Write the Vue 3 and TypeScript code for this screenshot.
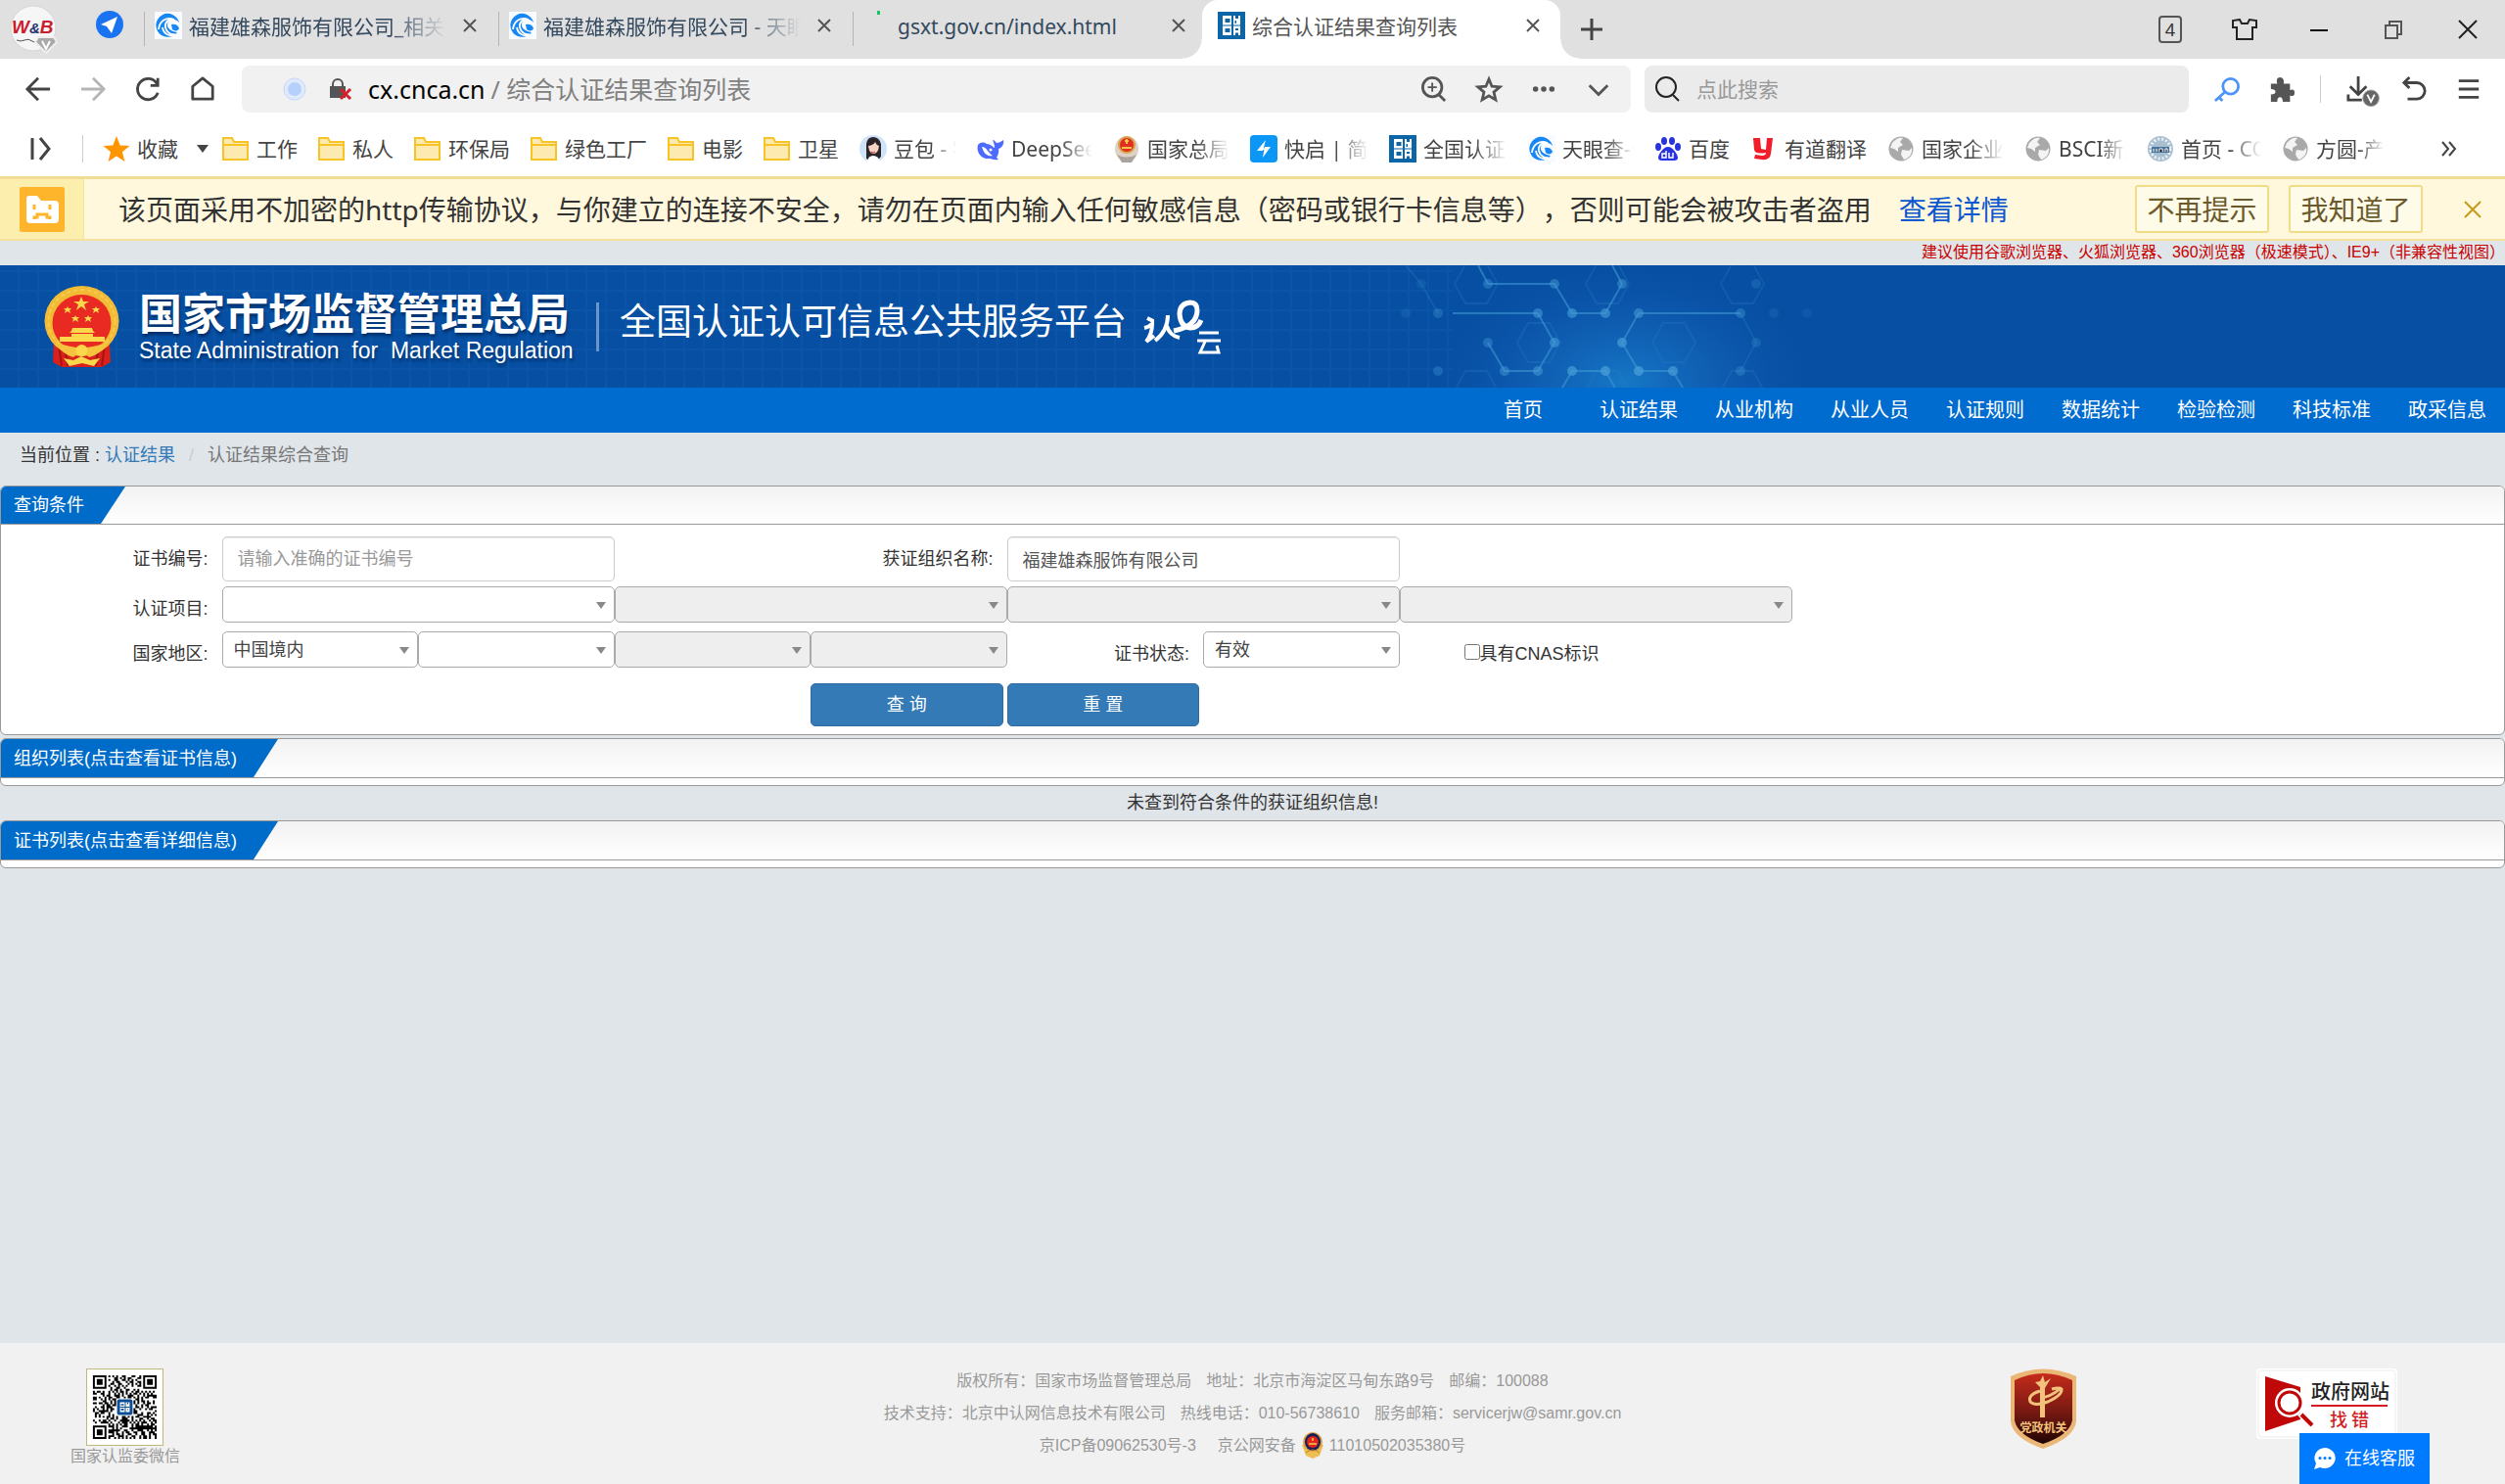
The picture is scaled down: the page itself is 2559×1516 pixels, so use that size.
<script setup lang="ts">
import { ref } from 'vue'

interface Tab { title: string; icon: string; active?: boolean; clipped?: boolean }
interface Bookmark { title: string; icon: string; width: number; fade?: boolean }

const cnca = '<rect width="28" height="28" fill="#0b65a6"/><path d="M5 4h9v20H5zM16 4h7v20h-7z" fill="#fff"/><path d="M7.500 7h5v4h-5zM7.500 17h5v4h-5zM5 13.500h9v1H5zM18 4h3v3h-3zM17.500 9h1.500v3h-1.500zM16 13.500h7v1h-7zM18 17h3v2h-3zM18 21.500h3V24h-3z" fill="#0b65a6"/>'
const tianyan = '<rect width="28" height="28" fill="#f8fbff"/><path d="M23 21A12 12 0 1 1 25 11c-4-5-11-4-12 1-1 4 3 8 10 9z" fill="#1687f5"/><path d="M4 18C5 9 12 5 20 8c-6-1-10 3-9 8s6 8 10 7c-5 3-12 0-13-7" fill="none" stroke="#fff" stroke-width="1.800"/><path d="M17 13c3-1 7 0 8 4-1 3-5 3-7 1" fill="#1687f5"/>'
const folder = '<path d="M1 3h9l2 4h14v18H1z" fill="#fdeab0" stroke="#f7c325" stroke-width="2"/><path d="M2 10h23" stroke="#f7c325" stroke-width="2"/>'
const globe = '<circle cx="14" cy="14" r="12.500" fill="#a9a9a9"/><path d="M5 8c4-5 8-6 11-5l-3 4 3 3-5 3v4l-4-3-4-1zM15 15l7 1 3-3c1 6-3 11-8 12l-3-5z" fill="#f4f4f4"/>'

const tabs: Tab[] = [
  { title: '福建雄森服饰有限公司_相关搜', icon: tianyan, clipped: true },
  { title: '福建雄森服饰有限公司 - 天眼查', icon: tianyan, clipped: true },
  { title: 'gsxt.gov.cn/index.html', icon: '<rect x="14" y="-1" width="3" height="4" fill="#14c866"/>' },
  { title: '综合认证结果查询列表', icon: cnca, active: true },
]

const bookmarks: Bookmark[] = [
  { title: '工作', icon: folder, width: 42 },
  { title: '私人', icon: folder, width: 42 },
  { title: '环保局', icon: folder, width: 63 },
  { title: '绿色工厂', icon: folder, width: 84 },
  { title: '电影', icon: folder, width: 42 },
  { title: '卫星', icon: folder, width: 42 },
  { title: '豆包 - 字', icon: '<circle cx="14" cy="14" r="14" fill="#cfe4fb"/><path d="M7 24V9q1-7 7-7t8 7v13l-3 3H9z" fill="#2b2529"/><path d="M9 11q6-1 7-4 1 3 4 4-1 8-5.500 8T9 11z" fill="#f8d5c4"/><path d="M8 27q1-6 6-6t7 6q-7 3-13 0z" fill="#fff"/><path d="M12 17q2 2 4 0" stroke="#c33" fill="none"/>', width: 64, fade: true },
  { title: 'DeepSeek', icon: '<path d="M1 10c3-3 6-3 9-1 4 0 6 3 8 4 0-3-1-6-2-8 2 0 3 2 4 3 3 0 5-2 7-3 1 5-2 8-5 9 1 4-1 7-2 9l2 2c-4 1-7-1-9-1C4 25-1 17 1 10z" fill="#4d6bfe"/><path d="M5 12c5 0 6 6 11 9-4 1-7-1-9-4z" fill="#fff"/><circle cx="14" cy="15" r="1.500" fill="#fff"/>', width: 83, fade: true },
  { title: '国家总局', icon: '<ellipse cx="14" cy="14" rx="12" ry="13" fill="#ddd2c5"/><circle cx="14" cy="10" r="9" fill="#d9a349"/><circle cx="14" cy="10" r="7" fill="#e12d22"/><path d="M9 13h10M14 4v5M12 6h4" stroke="#f8c647" stroke-width="2"/><path d="M4 20q10 5 20 0l-5 8H9z" fill="#aaa39d"/>', width: 84, fade: true },
  { title: '快启 | 简约', icon: '<rect width="28" height="28" rx="4" fill="#0c96f6"/><path d="M16 5l-9 11h6zM13 23l8-11h-6zM12 15h4l-2-2z" fill="#fff"/>', width: 86, fade: true },
  { title: '全国认证', icon: cnca, width: 86, fade: true },
  { title: '天眼查-企', icon: tianyan, width: 73, fade: true },
  { title: '百度', icon: '<ellipse cx="4" cy="12" rx="3" ry="4" fill="#2932e1"/><ellipse cx="10" cy="6" rx="3" ry="4" fill="#2932e1"/><ellipse cx="18" cy="6" rx="3" ry="4" fill="#2932e1"/><ellipse cx="24" cy="12" rx="3" ry="4" fill="#2932e1"/><path d="M14 12c5 0 10 8 10 11 0 4-5 3-10 3s-10 1-10-3c0-3 5-11 10-11z" fill="#2932e1"/><path d="M12 16v7H8v-4h4M15 18v5h4v-5" stroke="#fff" stroke-width="1.500" fill="none"/>', width: 42 },
  { title: '有道翻译', icon: '<path d="M3 3h7l1 11 5 1 1-12h6l-2 16q-1 7-9 6l-8-1 1-4 7 1q4 0 4-3-11 2-12-3z" fill="#f21d2b"/>', width: 84 },
  { title: '国家企业', icon: globe, width: 84, fade: true },
  { title: 'BSCI新版', icon: globe, width: 69, fade: true },
  { title: '首页 - CQC', icon: '<circle cx="14" cy="14" r="13" fill="#a8bfd2"/><circle cx="14" cy="14" r="10" fill="none" stroke="#e9f0f6" stroke-width="3" stroke-dasharray="2 2"/><path d="M5 12h18v6H5z" fill="#4b7399"/><path d="M7 17v-3M10 17v-3M13 17v-3h3v3M19 17v-3h2v3" stroke="#fff"/>', width: 82, fade: true },
  { title: '方圆-产品', icon: globe, width: 70, fade: true },
]

const navItems = ['首页', '认证结果', '从业机构', '从业人员', '认证规则', '数据统计', '检验检测', '科技标准', '政采信息']
const certNo = ref('')
const orgName = ref('福建雄森服饰有限公司')
const cnas = ref(false)

/* Bright nodes and links of the header artwork: x, y, opacity */
const nodes = [
  [100, 19, 0.5], [168, 19, 0.6], [237, 19, 0.6], [151, 49, 0.7], [186, 49, 0.8], [220, 49, 0.8], [254, 49, 0.7],
  [358, 49, 0.5], [49, 49, 0.4], [100, 79, 0.5], [168, 79, 0.8], [237, 79, 0.9], [374, 19, 0.3], [374, 79, 0.3],
  [117, 108, 0.6], [151, 108, 0.7], [186, 108, 0.9], [220, 108, 1], [254, 108, 1], [289, 108, 0.9], [49, 108, 0.4],
  [358, 108, 0.4], [32, 19, 0.2], [16, 49, 0.2], [392, 49, 0.2], [426, 49, 0.15],
]
const hexes = [[222, 19], [152, 79], [290, 79], [88, 19], [360, 19], [222, 128], [360, 128], [88, 128]]

/* Deterministic module grid for the QR picture */
const size = 33
const modules: number[][] = []
let seed = 7919
for (let y = 0; y < size; y++) {
  for (let x = 0; x < size; x++) {
    seed = (seed * 1103515245 + 12345) % 2147483648
    const corner = (x < 8 && y < 8) || (x > 24 && y < 8) || (x < 8 && y > 24)
    const centre = x > 11 && x < 21 && y > 11 && y < 21
    if (!corner && !centre && (seed >> 12) % 2 === 0) modules.push([x, y])
  }
}
const qrPath = modules.map(([x, y]) => `M${x} ${y}h1v1h-1z`).join('')
</script>

<template>
  <div class="page">
    <div class="tabstrip">
      <div class="profile">
        <svg class="avatar" viewBox="0 0 50 50"><circle cx="24" cy="25" r="23" fill="#f6f6f6" stroke="#d5d5d5" /><text x="2" y="30" font-family="Liberation Sans" font-style="italic" font-weight="700" font-size="19" fill="#c8202e">W<tspan font-size="15" fill="#27356f">&amp;</tspan>B</text><path d="M7 37q4 2 8 0t8 1 8-1" fill="none" stroke="#555" /><path d="M29 34h16l3 5-11 11-11-11z" fill="#aaa" stroke="#eee" stroke-width="2" /><path d="M33 38l4 8 4-8" fill="none" stroke="#fff" stroke-width="2" /></svg>
        <svg class="plane" viewBox="0 0 28 28"><circle cx="14" cy="14" r="14" fill="#1a73f0" /><path d="M22 6L5 14l6 2 5 7z" fill="#fff" /></svg>
      </div>
      <div v-for="tab in tabs" :key="tab.title" class="tab" :class="{ active: tab.active }">
        <svg class="site" viewBox="0 0 28 28" v-html="tab.icon"></svg>
        <span class="tab-title" :class="{ fade: tab.clipped }">{{ tab.title }}</span>
        <button class="close" aria-label="关闭标签"><svg width="14" height="14" viewBox="0 0 14 14"><path d="M1 1l12 12M13 1L1 13" stroke="#555" stroke-width="2" /></svg></button>
      </div>
      <button class="newtab" aria-label="新标签"><svg width="22" height="22" viewBox="0 0 22 22"><path d="M11 0v22M0 11h22" stroke="#444" stroke-width="3" /></svg></button>
      <div class="winctl">
        <button aria-label="标签数"><span class="count">4</span></button>
        <button aria-label="皮肤"><svg width="26" height="24" viewBox="0 0 26 24"><path d="M8 2L1 3v7h4v12h16V10h4V3l-7-1-2 4h-6z" fill="none" stroke="#222" stroke-width="2" /></svg></button>
        <button aria-label="最小化"><svg width="20" height="20" viewBox="0 0 20 20"><path d="M1 11h18" stroke="#111" stroke-width="2" /></svg></button>
        <button aria-label="还原"><svg width="20" height="20" viewBox="0 0 20 20"><path d="M2 6h12v13H2zM6 6V2h12v13h-4" fill="none" stroke="#555" stroke-width="2" /></svg></button>
        <button aria-label="关闭"><svg width="20" height="20" viewBox="0 0 20 20"><path d="M1 1l18 18M19 1L1 19" stroke="#222" stroke-width="2" /></svg></button>
      </div>
    </div>

    <div class="toolbar">
      <button class="tool" aria-label="后退"><svg viewBox="0 0 28 28"><path d="M27 14H3M14 2L2 14l12 12" /></svg></button>
      <button class="tool dim" aria-label="前进"><svg viewBox="0 0 28 28"><path d="M1 14h24M14 2l12 12-12 12" /></svg></button>
      <button class="tool" aria-label="刷新"><svg viewBox="0 0 28 28"><path d="M24 8A11.500 11.500 0 1 0 25 18M25 2v8h-8" /></svg></button>
      <button class="tool" aria-label="主页"><svg viewBox="0 0 28 28"><path d="M3 11L14 2l11 9v14H3z" stroke-linejoin="round" /></svg></button>
      <div class="address">
        <svg class="halo" viewBox="0 0 24 24"><circle cx="12" cy="12" r="11" fill="#e1eafb" stroke="#c4d8fa" /><circle cx="12" cy="12" r="7" fill="#b5d0fb" /></svg>
        <svg class="lock" viewBox="0 0 24 24"><path d="M4 10V7a5 5 0 0 1 10 0v3" fill="none" stroke="#555" stroke-width="2" /><path d="M1 9h16v12H1z" fill="#555" /><path d="M12 12l10 10M22 12L12 22" stroke="#d8202a" stroke-width="3" /></svg>
        <span class="host">cx.cnca.cn</span><span class="path">/ 综合认证结果查询列表</span>
        <div class="addr-tools">
          <button class="tool" aria-label="缩放"><svg viewBox="0 0 28 28"><circle cx="12" cy="12" r="10.500" /><path d="M19 20l7 7" /><path d="M12 7v10M7 12h10" stroke-width="2" /></svg></button>
          <button class="tool" aria-label="收藏"><svg viewBox="0 0 28 28"><path d="M14 3l3.300 8 8.700.700-6.600 5.600 2 8.500L14 21.300l-7.400 4.500 2-8.500L2 11.700l8.700-.700z" /></svg></button>
          <button class="tool" aria-label="更多"><svg viewBox="0 0 28 28"><g class="dots"><circle cx="5" cy="14" r="3" /><circle cx="14" cy="14" r="3" /><circle cx="23" cy="14" r="3" /></g></svg></button>
          <button class="tool" aria-label="展开"><svg viewBox="0 0 28 28"><path d="M4 10l10 10 10-10" /></svg></button>
        </div>
      </div>
      <div class="search">
        <svg width="28" height="28" viewBox="0 0 28 28"><circle cx="12" cy="12" r="10" fill="none" stroke="#222" stroke-width="2" /><path d="M19 20l6 6" stroke="#222" stroke-width="2" /></svg>
        <input type="text" placeholder="点此搜索" aria-label="搜索" />
      </div>
      <div class="extras">
        <button class="tool" aria-label="密码"><svg viewBox="0 0 28 28"><g stroke="#4c94f7"><circle cx="18" cy="11" r="8.500" /><path d="M12 17L1 27M5 23l4 4" /></g></svg></button>
        <button class="tool" aria-label="扩展"><svg viewBox="0 0 28 28"><path d="M2 8h7q-2-7 3-7t4 7h7v7q5-2 5 3t-5 3v7h-8q0-5-3-5t-3 5H2v-8q5 0 5-3t-5-3z" fill="#555" stroke="none" /></svg></button>
        <i class="rule"></i>
        <button class="tool" aria-label="下载"><svg viewBox="0 0 28 28"><path d="M13 0v19M4 11l9 9 9-9M2 20v6h15" /><circle cx="27" cy="24" r="9" fill="#666" stroke="#aaa" stroke-width="1" /><path d="M23 20l4 8 4-8" stroke="#fff" stroke-width="2" /></svg></button>
        <button class="tool" aria-label="撤销"><svg viewBox="0 0 28 28"><path d="M9 1L3 7l6 6M3 7h14a9 9 0 0 1 0 18H7" /></svg></button>
        <button class="tool" aria-label="菜单"><svg viewBox="0 0 28 28"><path d="M3 5h22M3 14h22M3 23h22" /></svg></button>
      </div>
    </div>

    <div class="bookmarks">
      <svg class="expand" viewBox="0 0 24 24"><path d="M3 1v22M11 1l9 11-9 11" fill="none" stroke="#444" stroke-width="3" /></svg>
      <i class="rule"></i>
      <div class="fav">
        <svg width="28" height="28" viewBox="0 0 28 28"><path d="M14 1l3.700 9.500 9.800.500-7.600 6.300 2.600 9.700L14 21.500 5.500 27l2.600-9.700L.500 11l9.800-.500z" fill="#ff9500" /></svg>
        <span>收藏</span>
        <svg width="12" height="8" viewBox="0 0 12 8"><path d="M0 0h12L6 8z" fill="#444" /></svg>
      </div>
      <a v-for="(b, i) in bookmarks" :key="i" href="#" class="bm">
        <svg class="site" viewBox="0 0 28 28" v-html="b.icon"></svg>
        <span :class="{ fade: b.fade }" :style="{ width: b.width + 'px' }">{{ b.title }}</span>
      </a>
      <svg class="more" width="16" height="16" viewBox="0 0 16 16"><path d="M1 1l6 7-6 7M8 1l6 7-6 7" fill="none" stroke="#444" stroke-width="2" /></svg>
    </div>

    <div class="notice">
      <div class="notice-icon">
        <svg width="46" height="46" viewBox="0 0 46 46"><rect width="46" height="46" rx="2" fill="#ffb52b" /><path d="M7 12q0-3 3-3h8l4 5h14q4 0 4 4v15q0 4-4 4H11q-4 0-4-4z" fill="#fff" /><path d="M15 18v5M31 18v5M15 33v-2h3v-3h10v3h3v2" fill="none" stroke="#ffb52b" stroke-width="3" /></svg>
      </div>
      <p>该页面采用不加密的http传输协议，与你建立的连接不安全，请勿在页面内输入任何敏感信息（密码或银行卡信息等），否则可能会被攻击者盗用</p>
      <a href="#">查看详情</a>
      <div class="notice-actions">
        <button>不再提示</button>
        <button>我知道了</button>
        <button class="dismiss" aria-label="关闭提示"><svg width="18" height="18" viewBox="0 0 18 18"><path d="M1 1l16 16M17 1L1 17" stroke="#c49a18" stroke-width="2" /></svg></button>
      </div>
    </div>

    <p class="advice">建议使用谷歌浏览器、火狐浏览器、360浏览器（极速模式）、IE9+（非兼容性视图）</p>

    <header class="banner">
      <svg class="art" width="500" height="125" viewBox="0 0 500 125">
        <defs><radialGradient id="glow"><stop offset="0" stop-color="#1a83cf" stop-opacity=".8" /><stop offset="1" stop-color="#1a5fbf" stop-opacity="0" /></radialGradient></defs>
        <ellipse cx="240" cy="120" rx="190" ry="120" fill="url(#glow)" />
        <g fill="none" stroke="#2f80c8" stroke-opacity=".25" stroke-width="2"><path v-for="([x, y], i) in hexes" :key="i" :d="`M${x - 22} ${y}l11-20h22l11 20-11 20h-22z`" /></g>
        <g fill="none" stroke="#3e97d2" stroke-opacity=".6" stroke-width="2"><path d="M90 0l10 19h68l18 30h34l17-30L227 0M64 49h87M254 49h104M254 49l-17 30 17 29h35l10 17M151 49l17 30-17 29h-34l-17-29M176 125l10-17h34l10 17" /><path d="M16 0l16 19 17 30M358 49l16 30-16 29" stroke-opacity=".2" /></g>
        <circle v-for="([x, y, o], i) in nodes" :key="'n' + i" :cx="x" :cy="y" r="5" fill="#459bd6" :fill-opacity="o * 0.8" />
      </svg>
      <svg class="emblem" viewBox="0 0 77 83">
        <path d="M10 58l57 0 1 20-9 5H18l-9-5z" fill="#d8201c" /><path d="M15 60l3 22M22 66l2 16M62 60l-3 22M55 66l-2 16" stroke="#a8120f" stroke-width="2" />
        <ellipse cx="38.500" cy="36" rx="38" ry="36" fill="#f2bb35" /><ellipse cx="38.500" cy="36" rx="34" ry="32" fill="none" stroke="#f7cb50" stroke-width="2" stroke-dasharray="4 3" />
        <ellipse cx="38.500" cy="38" rx="30" ry="29" fill="#e92a22" />
        <path d="M38 11l2 5h6l-5 3 2 6-5-4-5 4 2-6-5-3h6z" fill="#fbd84b" />
        <g fill="#fbd84b"><path d="M24 21l1 2h3l-2 2 1 3-3-2-3 2 1-3-2-2h3zM53 21l1 2h3l-2 2 1 3-3-2-3 2 1-3-2-2h3zM32 30l1 2h3l-2 2 1 3-3-2-3 2 1-3-2-2h3zM45 30l1 2h3l-2 2 1 3-3-2-3 2 1-3-2-2h3zM29 43h20l1 3 2 2H26l2-2zM28 49h22v3h12v5H16v-5h12z" /></g>
        <path d="M12 57q26 12 54 0-8 13-20 16l-8-8-8 8Q18 70 12 57z" fill="#f5c33e" /><circle cx="38.500" cy="66" r="6" fill="#fbd84b" /><path d="M20 74l10 2 8-4 9 4 10-2-6 8-12-3-13 3z" fill="#fbd84b" />
      </svg>
      <div class="agency">
        <strong>国家市场监督管理总局</strong>
        <span>State Administration &nbsp;for&nbsp; Market Regulation</span>
      </div>
      <i class="bar"></i>
      <h1>全国认证认可信息公共服务平台</h1>
      <svg class="cloud" viewBox="0 0 80 56">
        <g fill="none" stroke="#fff"><path d="M4 19l6 3M1 29q5-1 8-4 0 10-6 18l8-6M25 16q0 16-13 26M24 27q3 10 13 12" stroke-width="4" /><path d="M31 32q24-5 24-21 0-8-7-8-11 1-11 12 1 13 11 14 8 0 11-8" stroke-width="5" /></g>
        <path d="M57 34h20M55 42h24M63 43l-5 11h19l-2-7" fill="none" stroke="#fff" stroke-width="3" />
      </svg>
    </header>
    <nav class="nav"><a v-for="n in navItems" :key="n" href="#">{{ n }}</a></nav>

    <main>
      <div class="crumbs">当前位置 : <a href="#">认证结果</a><i>/</i><span>认证结果综合查询</span></div>

      <section class="panel">
        <div class="head"><h2>查询条件</h2></div>
        <form class="form" @submit.prevent>
          <label class="lbl" for="certNo">证书编号:</label>
          <input id="certNo" v-model="certNo" class="span2" type="text" placeholder="请输入准确的证书编号" />
          <label class="lbl org" for="orgName">获证组织名称:</label>
          <input id="orgName" v-model="orgName" class="span2" type="text" />

          <label class="lbl first" for="project">认证项目:</label>
          <div class="pick span2"><select id="project"><option></option></select></div>
          <div v-for="n in 3" :key="n" class="pick span2"><select disabled :aria-label="'认证项目' + n"></select></div>

          <label class="lbl first" for="country">国家地区:</label>
          <div class="pick"><select id="country"><option>中国境内</option></select></div>
          <div class="pick"><select aria-label="省份"><option></option></select></div>
          <div class="pick"><select disabled aria-label="城市"></select></div>
          <div class="pick"><select disabled aria-label="区县"></select></div>
          <label class="lbl" for="status">证书状态:</label>
          <div class="pick"><select id="status"><option>有效</option></select></div>
          <label class="check"><input v-model="cnas" type="checkbox" />具有CNAS标识</label>

          <div class="actions">
            <button type="submit">查 询</button>
            <button type="reset">重 置</button>
          </div>
        </form>
      </section>

      <section class="panel list">
        <div class="head"><h2>组织列表(点击查看证书信息)</h2></div>
      </section>
      <p class="empty">未查到符合条件的获证组织信息!</p>
      <section class="panel list">
        <div class="head"><h2>证书列表(点击查看详细信息)</h2></div>
      </section>
    </main>

    <footer class="foot">
      <div class="wechat">
        <svg class="qr" viewBox="-3 -3 39 39"><rect x="-3" y="-3" width="39" height="39" fill="#fff" /><path :d="qrPath" /><g fill="none" stroke="#000"><path d="M.500.500h6v6h-6zM26.500.500h6v6h-6zM.500 26.500h6v6h-6z" /></g><path d="M2 2h3v3H2zM28 2h3v3h-3zM2 28h3v3H2z" /><rect x="12.500" y="12.500" width="8" height="8" rx="1" fill="#0d4f96" /><path d="M14 14h2.500v5H14zM17 14h2v5h-2z" fill="#fff" /><path d="M14.500 14.800h1.500v.800h-1.500zM14.500 17.300h1.500v.800h-1.500zM14 16.300h5v.400h-5zM17.700 14h.600v1h-.600zM17.700 17.500h.600v.500h-.600z" fill="#0d4f96" /></svg>
        <span>国家认监委微信</span>
      </div>
      <div class="legal">
        <p><span>版权所有：国家市场监督管理总局</span><span>地址：北京市海淀区马甸东路9号</span><span>邮编：100088</span></p>
        <p><span>技术支持：北京中认网信息技术有限公司</span><span>热线电话：010-56738610</span><span>服务邮箱：servicerjw@samr.gov.cn</span></p>
        <p class="records"><span>京ICP备09062530号-3</span><span>京公网安备</span>
          <svg class="police" viewBox="0 0 24 27"><path d="M1 13l4 11 7 3 7-3 4-11z" fill="#eebf55" /><ellipse cx="12" cy="10" rx="10" ry="10" fill="#d9a040" /><ellipse cx="12" cy="10" rx="8" ry="9" fill="#151d5c" /><ellipse cx="12" cy="10" rx="6" ry="6" fill="#df251d" /><path d="M8 12h8M12 6v3" stroke="#f6cf3f" stroke-width="1.500" /><path d="M5 21q7-6 14 0" fill="none" stroke="#b98126" /></svg>
          <span>11010502035380号</span></p>
      </div>
      <svg class="shield" viewBox="0 0 67 82">
        <defs><linearGradient id="red" x2="0" y2="1"><stop offset="0" stop-color="#c52b1b" /><stop offset=".6" stop-color="#6e1711" /><stop offset="1" stop-color="#1e0503" /></linearGradient></defs>
        <path d="M0 8Q33-7 67 8v46Q65 71 33 82 2 71 0 54z" fill="#ebb777" /><path d="M4 12Q33-2 63 12v41Q60 68 33 77 7 68 4 53z" fill="url(#red)" />
        <path d="M30 50V19l-5-5 5-1 3-6 2 7 6-4-6 10v30zM27 13l13 0" fill="#f2c27c" /><path d="M30 23q-13 4-10 11 5 5 18 0 15-7 14-13-2-2-10 0M30 30q11-1 20-9" fill="none" stroke="#f2c27c" stroke-width="3" />
        <text x="33.500" y="65" text-anchor="middle" font-family="Noto Sans CJK SC" font-weight="700" font-size="12" fill="#f2c27c">党政机关</text>
      </svg>
      <svg class="report" viewBox="0 0 144 72">
        <rect width="144" height="72" rx="4" fill="#fff" /><rect x="2" y="2" width="140" height="68" rx="4" fill="none" stroke="#f5f5f5" stroke-width="2" />
        <path d="M9 8l36 11v33L9 64z" fill="#c00808" /><path d="M45 45l13 14" stroke="#fff" stroke-width="8" /><circle cx="34" cy="35" r="15" fill="#fff" /><circle cx="34" cy="35" r="11" fill="#fff" stroke="#c00808" stroke-width="3" /><path d="M46 47l11 11" stroke="#c00808" stroke-width="4" />
        <text x="56" y="31" font-family="Noto Sans CJK SC" font-weight="500" font-size="20" fill="#222">政府网站</text><path d="M56 38h78" stroke="#d11c24" stroke-width="2" />
        <text x="75" y="59" font-family="Noto Sans CJK SC" font-weight="500" font-size="18" fill="#d11c24">找 错</text>
      </svg>
      <button class="chat">
        <svg width="24" height="24" viewBox="0 0 24 24"><path d="M12 1a11 10.500 0 1 1-5 20l-6 2 2-6A11 10.500 0 0 1 12 1z" fill="#fff" /><g fill="#007aff"><circle cx="7" cy="11.500" r="1.500" /><circle cx="12" cy="11.500" r="1.500" /><circle cx="17" cy="11.500" r="1.500" /></g></svg>
        在线客服
      </button>
    </footer>
  </div>
</template>

<style>
body { margin: 0; background: #e0e5e9; }
</style>

<style scoped>
.page { min-height: 100vh; display: flex; flex-direction: column; background: #e0e5e9; color: #333; font: 18px/26px "Liberation Sans", "Noto Sans CJK SC", sans-serif; }
.page *, .page *::before, .page *::after { box-sizing: border-box; }
p, h1, h2 { margin: 0; font-weight: 400; }
svg { display: block; flex: none; overflow: visible; }
button { font: inherit; border: 0; background: none; padding: 0; cursor: pointer; color: inherit; }
a { text-decoration: none; color: #337ab7; }
.site { width: 28px; height: 28px; }
.rule { width: 1px; height: 28px; background: #ccc; }
.fade { mask-image: linear-gradient(90deg, #000 60%, transparent); }
.tabstrip, .toolbar, .bookmarks, .notice { font-family: "Noto Sans", "Noto Sans CJK SC", sans-serif; white-space: nowrap; }

.tabstrip { height: 60px; display: flex; background: #e0e0e0; font-size: 21px; color: #34495e; }
.profile { width: 147px; display: flex; gap: 38px; padding: 4px 0 0 10px; }
.avatar { width: 50px; height: 50px; }
.plane { width: 28px; height: 28px; margin-top: 7px; }
.tab { position: relative; width: 362px; padding: 12px 0 0 11px; display: flex; gap: 7px; }
.tab::before { content: ""; position: absolute; left: 0; top: 12px; width: 1px; height: 35px; background: #b5b5b5; }
.tab-title { width: 273px; line-height: 30px; overflow: hidden; }
.tab-title.fade { width: 263px; margin-right: 10px; mask-image: linear-gradient(90deg, #000 78%, transparent); }
.close { align-self: flex-start; margin-top: 7px; }
.tab.active { width: 366px; margin-left: -5px; padding-left: 16px; background: #fff; border-radius: 16px 16px 0 0; color: #555; }
.tab.active::before, .tab.active::after { content: ""; position: absolute; top: auto; bottom: 0; width: 20px; height: 20px; }
.tab.active::before { left: -20px; background: radial-gradient(circle at 0 0, transparent 19px, #fff 20px); }
.tab.active::after { right: -20px; background: radial-gradient(circle at 100% 0, transparent 19px, #fff 20px); }
.newtab { margin-left: 21px; }
.winctl { margin-left: auto; display: flex; }
.winctl button { width: 76px; display: flex; align-items: center; justify-content: center; }
.count { width: 24px; height: 28px; border: 2px solid #555; border-radius: 4px; font-size: 18px; line-height: 24px; color: #333; }

.toolbar { height: 62px; display: flex; align-items: center; background: #fff; padding: 0 9px 0 11px; }
.tool { width: 56px; height: 48px; display: flex; align-items: center; justify-content: center; flex: none; }
.tool svg { width: 26px; height: 26px; fill: none; stroke: #444; stroke-width: 3; }
.tool.dim svg { stroke: #b5b5b5; }
.dots { fill: #555; stroke: none; }
.address { flex: 1 1 0; min-width: 0; height: 48px; margin-left: 12px; padding: 0 5px 0 42px; display: flex; align-items: center; background: #f1f1f1; border-radius: 8px; font-size: 25px; line-height: 32px; }
.halo, .lock { width: 24px; height: 24px; margin-right: 23px; }
.lock { margin-right: 16px; }
.host { color: #000; }
.path { margin-left: 6px; color: #808080; }
.addr-tools { margin-left: auto; display: flex; }
.addr-tools .tool svg { stroke: #555; }
.search { width: 556px; height: 48px; margin-left: 14px; padding-left: 10px; display: flex; align-items: center; gap: 15px; background: #ebebeb; border-radius: 8px; }
.search input { border: 0; background: none; font: inherit; font-size: 21px; outline: 0; padding: 0; }
.search input::placeholder { color: #999; }
.extras { display: flex; align-items: center; padding-left: 11px; }
.extras .rule { margin: 0 11px; }

.bookmarks { height: 58px; display: flex; align-items: center; background: #fff; padding: 2px 49px 0 30px; font-size: 21px; line-height: 30px; color: #444; }
.expand { width: 24px; height: 24px; margin-right: 30px; }
.fav { display: flex; align-items: center; gap: 7px; margin: 0 14px 0 20px; }
.fav span { margin-right: 12px; }
.bm { display: flex; align-items: center; gap: 7px; margin-right: 21px; color: #444; }
.bm span { overflow: hidden; }
.more { margin-left: auto; }

.notice { height: 66px; display: flex; align-items: center; background: #fff8dc; border-top: 3px solid #f1dc94; border-bottom: 2px solid #f5e19c; font-size: 28px; line-height: 40px; }
.notice-icon { width: 86px; align-self: stretch; display: flex; align-items: center; padding-left: 20px; background: #fcefad; border-right: 1px solid #f3e3a0; margin-right: 35px; }
.notice p { text-spacing-trim: space-all; }
.notice a { margin-left: 28px; color: #0b57d0; }
.notice-actions { margin-left: auto; margin-right: 20px; display: flex; align-items: center; gap: 20px; }
.notice-actions button { width: 137px; height: 49px; border: 2px solid #f1dd85; border-radius: 3px; background: #fffbe9; color: #6b5a2c; }
.notice-actions .dismiss { width: 22px; height: 22px; margin-left: 22px; border: 0; background: none; }

.advice { height: 25px; text-align: right; font-size: 16px; line-height: 24px; color: #c80000; }

.banner { position: relative; height: 125px; display: flex; align-items: center; padding-left: 45px; color: #fff; background: #064fa2; }
.banner::before { content: ""; position: absolute; inset: 0 42% 0 0; background: repeating-linear-gradient(90deg, transparent 0 18px, #0e5bad 18px 20px), repeating-linear-gradient(0deg, transparent 0 18px, #0e5bad 18px 20px); opacity: 0.5; }
.banner > * { position: relative; }
.banner .art { position: absolute; left: 55.500%; top: 0; overflow: hidden; }
.emblem { width: 77px; height: 83px; }
.agency { width: 445px; margin-left: 20px; display: flex; flex-direction: column; white-space: nowrap; text-shadow: 1px 3px 3px #03306b; }
.agency strong { font-size: 44px; line-height: 48px; }
.agency span { font-size: 23px; line-height: 24px; }
.bar { width: 3px; height: 50px; margin: 0 21px 0 22px; background: #6b95c8; }
h1 { font-size: 37px; line-height: 48px; white-space: nowrap; margin-bottom: 8px; }
.cloud { width: 80px; height: 56px; margin-left: 17px; }
.nav { height: 46px; display: flex; justify-content: flex-end; background: #006cd0; }
.nav a { width: 118px; text-align: center; font-size: 20px; line-height: 46px; color: #fff; }

.crumbs { height: 54px; padding: 10px 20px; }
.crumbs i { margin: 0 14px; font-style: normal; color: #ccc; }
.crumbs span { color: #777; }
.panel { border: 1px solid #999; border-radius: 6px; background: #fff; overflow: hidden; }
.head { height: 39px; border-bottom: 1px solid #999; background: linear-gradient(#f2f2f2, #fff); display: flex; }
h2 { padding: 0 42px 0 13px; font-size: 18px; line-height: 39px; color: #fff; background: #006cc9; clip-path: polygon(0 0, 100% 0, calc(100% - 25px) 100%, 0 100%); }
.form { padding: 12px 126px 8px 25px; display: grid; grid-template-columns: repeat(12, minmax(0, 1fr)); }
.lbl { padding-right: 14px; text-align: right; line-height: 46px; white-space: nowrap; }
.first { grid-column: 1; }
.org { grid-column: 4 / span 2; }
.span2 { grid-column: span 2; }
.form > input { height: 46px; margin-bottom: 5px; padding: 0 15px; border: 1px solid #ccc; border-radius: 5px; font: inherit; color: #555; box-shadow: inset 0 1px 1px rgba(0, 0, 0, 0.08); }
.form > input::placeholder { color: #999; }
.pick { position: relative; height: 46px; }
.pick::after { content: ""; position: absolute; right: 9px; top: 16px; border: 5px solid transparent; border-top: 7px solid #888; border-bottom: 0; pointer-events: none; }
select { appearance: none; width: 100%; height: 37px; padding: 0 11px; border: 1px solid #aaa; border-radius: 5px; background: #fff; font: inherit; color: #444; }
select:disabled { background: #eee; opacity: 1; }
.check { grid-column: span 2; padding-left: 66px; line-height: 46px; }
.check input { width: 16px; height: 16px; margin: 0; }
.actions { grid-column: 5 / span 2; display: flex; gap: 4px; margin: 7px 4px 0 0; }
.actions button { flex: 1; height: 44px; border: 1px solid #2e6da4; border-radius: 5px; background: #337ab7; color: #fff; }
.list { margin-top: 3px; padding-bottom: 7px; }
.list .head { height: 40px; }
.list h2 { line-height: 40px; }
.empty { padding-top: 4px; height: 32px; text-align: center; }

.foot { position: relative; margin-top: auto; height: 144px; background: #f1f1f1; color: #999; font-size: 16px; display: grid; grid-template-columns: 10% 1fr 10%; align-items: start; }
.wechat { display: flex; flex-direction: column; align-items: center; padding-top: 26px; line-height: 22px; }
.qr { width: 79px; height: 79px; border: 1px solid #c0b878; }
.legal { padding-top: 22px; }
.legal p { display: flex; justify-content: center; align-items: center; gap: 15px; line-height: 33px; }
.legal .records { gap: 5px; }
.records span:first-child { margin-right: 17px; }
.police { width: 24px; height: 27px; }
.shield, .report { position: absolute; top: 26px; }
.shield { width: 67px; height: 82px; right: 438px; }
.report { width: 144px; height: 72px; right: 110px; }
.chat { position: fixed; right: 77px; bottom: 0; width: 133px; height: 52px; display: flex; align-items: center; gap: 8px; padding-left: 14px; background: #007aff; color: #fff; font-size: 18px; white-space: nowrap; }
</style>
